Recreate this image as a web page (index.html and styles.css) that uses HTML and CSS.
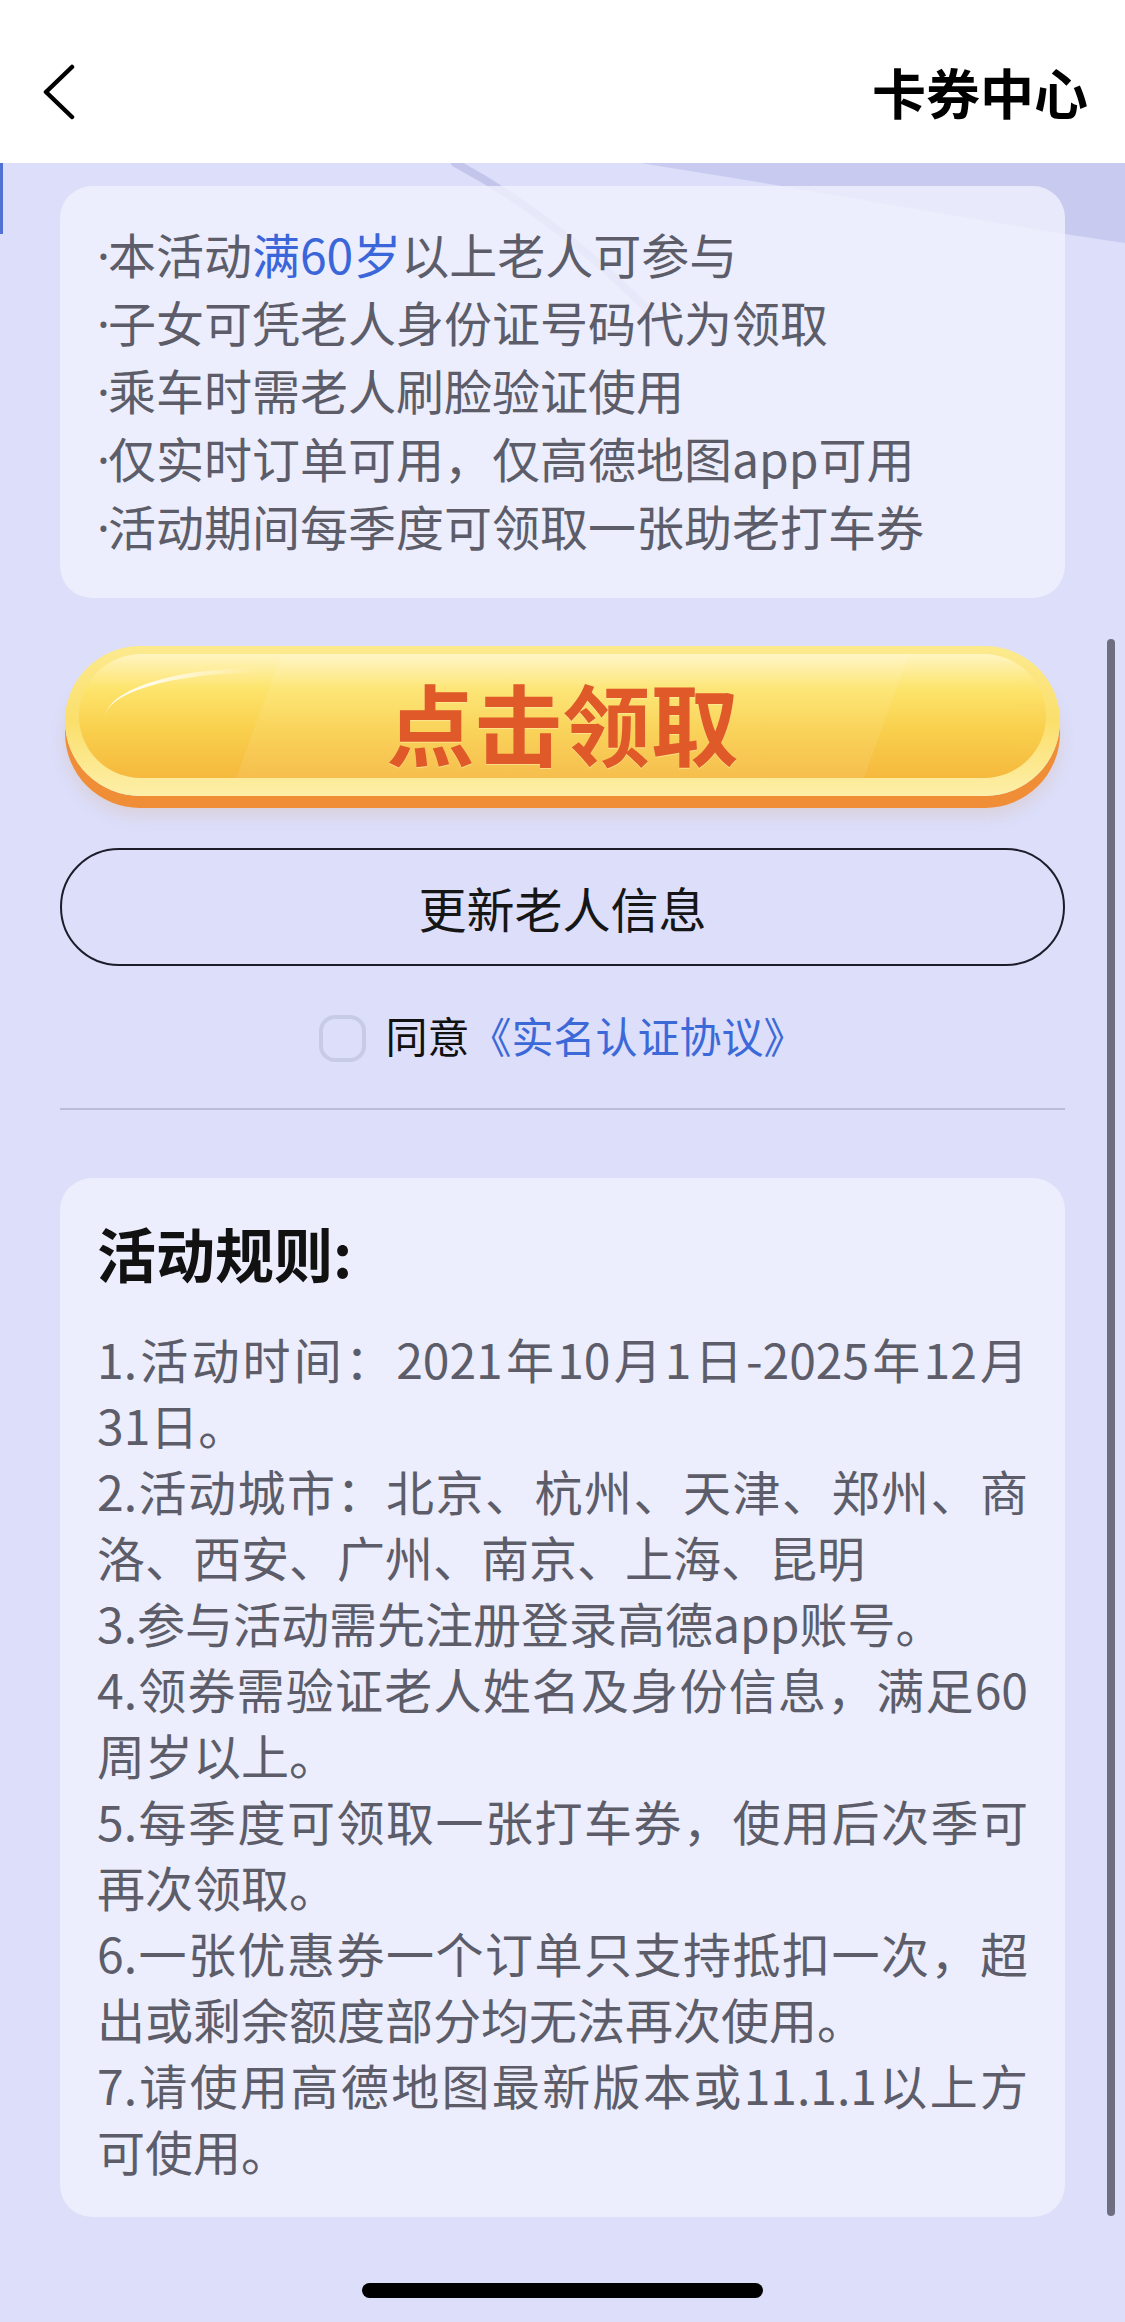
FILE: index.html
```html
<!DOCTYPE html>
<html lang="zh-CN">
<head>
<meta charset="utf-8">
<title>卡券中心</title>
<link rel="stylesheet" href="styles.css">
</head>
<body>
<div class="page">
  <header class="nav">
    <svg class="back" width="34" height="56" viewBox="0 0 34 56" aria-label="返回">
      <polyline points="30,3 4,28 30,53" fill="none" stroke="#000" stroke-width="4.5" stroke-linecap="round" stroke-linejoin="round"/>
    </svg>
    <h1 class="nav-title">卡券中心</h1>
  </header>

  <main class="content">
    <svg class="deco" width="1125" height="260" viewBox="0 0 1125 260" aria-hidden="true">
      <path d="M640 0 C 820 28, 1000 62, 1125 80 L1125 0 Z" fill="#c8cbef"/>
      <path d="M455 0 C 530 40, 600 95, 670 170" fill="none" stroke="#c0c3e8" stroke-width="8" stroke-linecap="round" opacity="0.9"/>
    </svg>
    <span class="edge-tab"></span>

    <section class="card notice">
      <p><span class="dot">·</span>本活动<span class="hl">满60岁</span>以上老人可参与</p>
      <p><span class="dot">·</span>子女可凭老人身份证号码代为领取</p>
      <p><span class="dot">·</span>乘车时需老人刷脸验证使用</p>
      <p><span class="dot">·</span>仅实时订单可用，仅高德地图app可用</p>
      <p><span class="dot">·</span>活动期间每季度可领取一张助老打车券</p>
    </section>

    <button class="claim" type="button"><span class="claim-text">点击领取</span></button>

    <button class="outline" type="button">更新老人信息</button>

    <div class="agree">
      <span class="checkbox"></span>
      <span class="agree-text">同意</span><a class="agree-link">《实名认证协议》</a>
    </div>

    <hr class="divider">

    <section class="card rules">
      <h2 class="rules-title">活动规则:</h2>
      <ol class="rules-list">
        <li><span class="full">1.活动时间：2021年10月1日-2025年12月</span>31日。</li>
        <li><span class="full">2.活动城市：北京、杭州、天津、郑州、商</span>洛、西安、广州、南京、上海、昆明</li>
        <li>3.参与活动需先注册登录高德app账号。</li>
        <li><span class="full">4.领券需验证老人姓名及身份信息，满足60</span>周岁以上。</li>
        <li><span class="full">5.每季度可领取一张打车券，使用后次季可</span>再次领取。</li>
        <li><span class="full">6.一张优惠券一个订单只支持抵扣一次，超</span>出或剩余额度部分均无法再次使用。</li>
        <li><span class="full">7.请使用高德地图最新版本或11.1.1以上方</span>可使用。</li>
      </ol>
    </section>
  </main>

  <div class="scrollbar"></div>
  <div class="home-indicator"></div>
</div>
</body>
</html>
```

FILE: styles.css
```css
* { box-sizing: border-box; }

html, body {
  margin: 0;
  padding: 0;
}

body {
  width: 1125px;
  height: 2322px;
  overflow: hidden;
  background: #dcdefa;
  font-family: "Noto Sans CJK SC", "Noto Sans", sans-serif;
}

.page {
  position: relative;
  width: 1125px;
  height: 2322px;
}

/* ---------- header ---------- */
.nav {
  height: 163px;
  background: #fff;
  display: flex;
  align-items: center;
  justify-content: space-between;
  padding: 21px 37px 0 42px;
  position: relative;
  z-index: 2;
}

.back { display: block; }

.nav-title {
  margin: 0;
  font-size: 54px;
  line-height: 1;
  font-weight: 700;
  color: #000;
}

/* ---------- content ---------- */
.content {
  position: relative;
  padding: 23px 60px 0;
}

.deco {
  position: absolute;
  left: 0;
  top: 0;
  z-index: 0;
}

.edge-tab {
  position: absolute;
  left: 0;
  top: 0;
  width: 3px;
  height: 71px;
  background: #4f72d4;
}

.card {
  position: relative;
  z-index: 1;
  background: rgba(238, 239, 253, 0.84);
  border-radius: 32px;
}

.notice {
  padding: 33px 37px 39px;
  font-size: 48px;
  line-height: 68px;
  color: #5c5d69;
}

.notice p {
  margin: 0;
  height: 68px;
  white-space: nowrap;
}

.dot {
  font-family: "Noto Sans", "Liberation Sans", sans-serif;
  line-height: 1;
  margin-right: -2px;
}

.hl { color: #3a66da; }

/* ---------- claim button ---------- */
.claim {
  position: relative;
  display: block;
  width: 995px;
  height: 150px;
  margin: 48px 5px 0;
  padding: 0;
  border: 0;
  border-radius: 75px;
  background: linear-gradient(180deg, #fcea8e 0%, #fbdf6c 50%, #fdefa8 100%);
  box-shadow: 0 12px 0 #ef8e37, 0 20px 16px rgba(214, 140, 60, 0.16);
  font: inherit;
  cursor: pointer;
}

.claim::before {
  content: "";
  position: absolute;
  left: 14px;
  right: 14px;
  top: 8px;
  bottom: 18px;
  border-radius: 64px;
  background:
    linear-gradient(110deg, rgba(255,255,255,0) 0 20%, rgba(255,255,255,0.08) 20% 82%, rgba(255,255,255,0) 82%),
    linear-gradient(180deg, #fff5c2 0%, #fde46c 28%, #f9cf4c 62%, #f5b93e 100%);
}

.claim::after {
  content: "";
  position: absolute;
  left: 40px;
  top: 22px;
  width: 150px;
  height: 50px;
  border-top: 5px solid rgba(255, 255, 255, 0.85);
  border-radius: 150px 0 0 0 / 50px 0 0 0;
  -webkit-mask-image: linear-gradient(90deg, #000 30%, transparent 100%);
  mask-image: linear-gradient(90deg, #000 30%, transparent 100%);
}

.claim-text {
  position: relative;
  z-index: 1;
  display: block;
  font-size: 88px;
  line-height: 136px;
  font-weight: 700;
  color: #e05a29;
  text-shadow: 0 1px 0 rgba(255, 236, 170, 0.6);
}

/* ---------- outline button ---------- */
.outline {
  position: relative;
  z-index: 1;
  display: block;
  width: 100%;
  height: 118px;
  margin: 52px 0 0;
  padding: 0;
  border: 2px solid #1c1c2a;
  border-radius: 59px;
  background: transparent;
  font: inherit;
  font-size: 48px;
  color: #161616;
  cursor: pointer;
}

/* ---------- agreement ---------- */
.agree {
  margin-top: 49px;
  height: 47px;
  display: flex;
  align-items: center;
  justify-content: center;
  font-size: 42px;
  line-height: 47px;
}

.checkbox {
  width: 47px;
  height: 47px;
  border: 4px solid #c8cbe5;
  border-radius: 16px;
  margin-right: 19px;
}

.agree-text,
.agree-link {
  padding-bottom: 8px;
}

.agree-text { color: #111; }

.agree-link { color: #3c69d8; }

.divider {
  margin: 46px 0 0;
  height: 2px;
  border: 0;
  background: #b9bcda;
}

/* ---------- rules ---------- */
.rules {
  margin-top: 68px;
  padding: 35px 37px 34px;
}

.rules-title {
  margin: 0 0 32px;
  font-size: 59px;
  line-height: 80px;
  font-weight: 700;
  color: #111;
}

.rules-list {
  margin: 0;
  padding: 0;
  list-style: none;
  font-size: 48px;
  line-height: 66px;
  color: #5c5d69;
  white-space: nowrap;
}

.rules-list .full {
  display: block;
  white-space: normal;
  text-align: justify;
  text-align-last: justify;
  text-justify: inter-character;
}

/* ---------- system overlays ---------- */
.scrollbar {
  position: absolute;
  left: 1107px;
  top: 639px;
  width: 8px;
  height: 1577px;
  border-radius: 4px;
  background: #6e6e80;
}

.home-indicator {
  position: absolute;
  left: 362px;
  top: 2283px;
  width: 401px;
  height: 15px;
  border-radius: 8px;
  background: #000;
}
```
